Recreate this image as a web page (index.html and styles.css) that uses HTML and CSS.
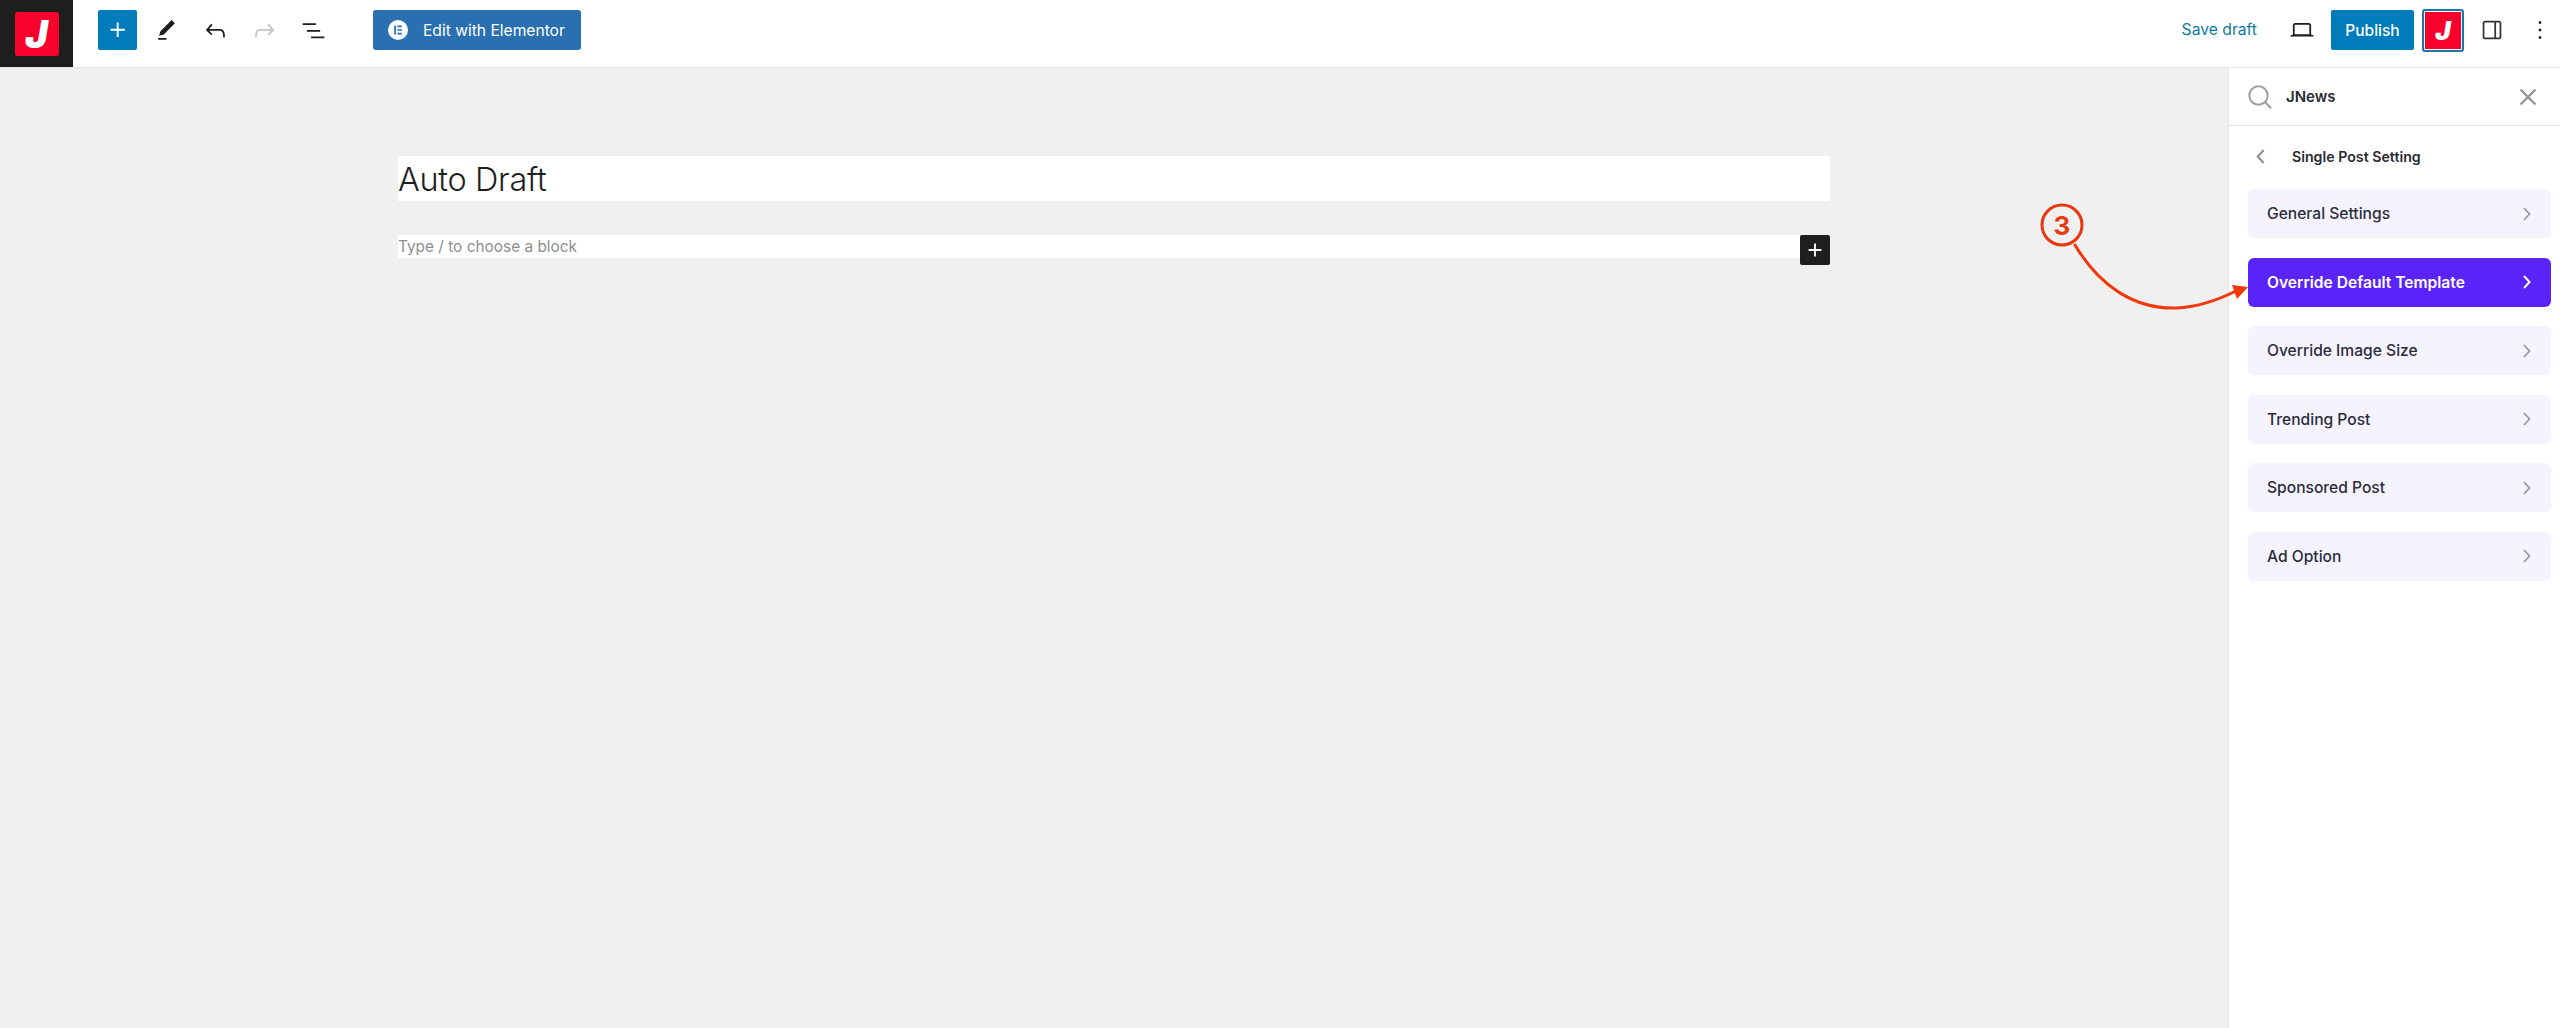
FILE: index.html
```html
<!DOCTYPE html>
<html lang="en">
<head>
<meta charset="utf-8">
<title>Auto Draft</title>
<link rel="stylesheet" href="styles.css">
</head>
<body>
<div class="app">
  <header class="topbar">
    <div class="site-logo"><div class="j-tile"><span class="j-letter">J</span></div></div>
    <button class="add-btn"><svg class="icon-add" viewBox="0 0 24 24"><path d="M11 12.5V17.5H12.5V12.5H17.5V11H12.5V6H11V11H6V12.5H11Z"/></svg></button>
    <div class="tools">
      <span class="slot"><svg class="icon-pen" viewBox="0 0 24 24"><path d="M20.1 5.1L16.9 2 6.2 12.7l-1.3 4.4 4.5-1.3L20.1 5.1zM4 20.8h8v-1.5H4v1.5z"/></svg></span>
      <span class="slot"><svg class="icon-lg" viewBox="0 0 24 24"><path d="M18.3 11.7c-.6-.6-1.4-.9-2.3-.9H6.7l2.9-3.3-1.1-1-4.5 5L8.5 16l1-1-2.7-2.7H16c.5 0 .9.2 1.3.5 1 1 1 3.4 1 4.5v.3h1.5v-.2c0-1.5 0-4.3-1.5-5.7z"/></svg></span>
      <span class="slot"><svg class="icon-lg icon-off" viewBox="0 0 24 24"><path d="M15.6 6.5l-1.1 1 2.9 3.3H8c-.9 0-1.7.3-2.3.9-1.4 1.5-1.4 4.2-1.4 5.6v.2h1.5v-.3c0-1.1 0-3.5 1-4.5.3-.3.7-.5 1.3-.5h9.2L14.5 15l1.1 1.1 4.6-4.6-4.6-5z"/></svg></span>
      <span class="slot"><svg class="icon-lg" viewBox="0 0 24 24"><path d="M3 6h11v1.5H3V6Zm3.5 5.5h11V13h-11v-1.5ZM21 17H10v1.5h11V17Z"/></svg></span>
    </div>
    <button class="elementor-btn">
      <svg class="icon-el" viewBox="0 0 20 20"><circle cx="10" cy="10" r="10" fill="#fff"/><path fill="#2a6fb0" d="M6.2 5.6h1.7v8.8H6.2zM9.4 5.6h4.4v1.7H9.4zM9.4 9.15h4.4v1.7H9.4zM9.4 12.7h4.4v1.7H9.4z"/></svg>
      <span>Edit with Elementor</span>
    </button>
    <div class="top-right">
      <span class="save-draft">Save draft</span>
      <span class="slot slot-laptop"><svg class="icon-laptop" viewBox="0 0 24 24"><path d="M20.5 16h-.7V8c0-1.1-.9-2-2-2H6.2c-1.1 0-2 .9-2 2v8h-.7c-.8 0-1.5.7-1.5 1.5h20c0-.8-.7-1.5-1.5-1.5zM5.7 8c0-.3.2-.5.5-.5h11.6c.3 0 .5.2.5.5v7.6H5.7V8z"/></svg></span>
      <button class="publish">Publish</button>
      <div class="j-toggle"><span class="j-letter j-small">J</span></div>
      <span class="slot slot-side"><svg class="icon-side" viewBox="0 0 24 24"><path d="M18 4H6c-1.1 0-2 .9-2 2v12c0 1.1.9 2 2 2h12c1.1 0 2-.9 2-2V6c0-1.1-.9-2-2-2zm-4 14.5H6c-.3 0-.5-.2-.5-.5V6c0-.3.2-.5.5-.5h8v13zm4.5-.5c0 .3-.2.5-.5.5h-2.5v-13H18c.3 0 .5.2.5.5v12z"/></svg></span>
      <span class="slot slot-dots"><svg class="icon-dots" viewBox="0 0 24 24"><path d="M13 19h-2v-2h2v2zm0-6h-2v-2h2v2zm0-6h-2V5h2v2z"/></svg></span>
    </div>
  </header>

  <main class="workspace">
    <section class="canvas">
      <div class="title-box">Auto Draft</div>
      <div class="block-row">
        <div class="placeholder">Type / to choose a block</div>
        <button class="block-add"><svg class="icon-block" viewBox="0 0 24 24"><path d="M11 12.5V19H13V13H19V11H13V5H11V11H5V13H11Z"/></svg></button>
      </div>
    </section>

    <aside class="sidebar">
      <div class="side-head">
        <svg class="icon-search" viewBox="0 0 24 24"><circle cx="10.5" cy="10.5" r="9.2"/><path d="M17 17l6 6.3"/></svg>
        <span class="side-title">JNews</span>
        <svg class="icon-close" viewBox="0 0 18 18"><path d="M1.5 1.5l15 15M16.5 1.5l-15 15"/></svg>
      </div>
      <div class="side-back">
        <svg class="icon-back" viewBox="0 0 8 14"><path d="M7 1L1.5 7 7 13"/></svg>
        <span>Single Post Setting</span>
      </div>
      <ul class="menu">
        <li class="menu-item"><span>General Settings</span><svg class="chev" viewBox="0 0 8 14"><path d="M1 1l5.5 6L1 13"/></svg></li>
        <li class="menu-item is-active"><span>Override Default Template</span><svg class="chev" viewBox="0 0 8 14"><path d="M1 1l5.5 6L1 13"/></svg></li>
        <li class="menu-item"><span>Override Image Size</span><svg class="chev" viewBox="0 0 8 14"><path d="M1 1l5.5 6L1 13"/></svg></li>
        <li class="menu-item"><span>Trending Post</span><svg class="chev" viewBox="0 0 8 14"><path d="M1 1l5.5 6L1 13"/></svg></li>
        <li class="menu-item"><span>Sponsored Post</span><svg class="chev" viewBox="0 0 8 14"><path d="M1 1l5.5 6L1 13"/></svg></li>
        <li class="menu-item"><span>Ad Option</span><svg class="chev" viewBox="0 0 8 14"><path d="M1 1l5.5 6L1 13"/></svg></li>
      </ul>
    </aside>
  </main>

  <svg class="callout" viewBox="0 0 230 120">
    <circle class="callout-ring" cx="32" cy="30" r="20"/>
    <text class="callout-num" x="32" y="39.5" text-anchor="middle">3</text>
    <path class="callout-line" d="M45 50C70 92 105 114 146 113C170 112 190 104 206 96"/>
    <path class="callout-head" d="M218 92L202 90L207 104Z"/>
  </svg>
</div>
</body>
</html>
```
FILE: styles.css
```css
* { box-sizing: border-box; }
html, body { margin: 0; padding: 0; }
body { font-family: Inter, "Liberation Sans", sans-serif; background: #f0f0f0; color: #1e1e1e; }
button { font: inherit; border: 0; padding: 0; margin: 0; cursor: pointer; }
svg { display: block; }
.app { position: relative; width: 2560px; height: 1028px; display: flex; flex-direction: column; overflow: hidden; }

.topbar { flex: 0 0 68px; display: flex; align-items: flex-start; background: #fff; border-bottom: 1px solid #e4e4e4; }
.site-logo { flex: 0 0 73px; height: 67px; background: #1e1e1e; display: flex; align-items: center; justify-content: center; }
.j-tile { width: 44px; height: 44px; border-radius: 2px; background: #f6022c; display: flex; align-items: center; justify-content: center; }
.j-letter { color: #fff; font-family: Inter, sans-serif; font-weight: 900; font-style: italic; font-size: 38px; line-height: 1; }
.j-small { font-size: 26px; }
.add-btn { flex: 0 0 39px; height: 40px; margin: 10px 0 0 25px; background: #007cba; border-radius: 2px; display: flex; align-items: center; justify-content: center; }
.icon-add { width: 30px; height: 30px; fill: #fff; }
.tools { display: flex; margin-left: 5px; height: 60px; }
.slot { display: flex; align-items: center; justify-content: center; width: 49px; height: 60px; }
.icon-pen { width: 25px; height: 25px; fill: #1e1e1e; }
.icon-lg { width: 29px; height: 29px; fill: #1e1e1e; }
.icon-off { fill: #c4c4c4; }
.elementor-btn { margin: 10px 0 0 35px; width: 208px; height: 40px; background: #2a6fb0; color: #fff; border-radius: 3px; display: flex; align-items: center; padding-left: 15px; font-size: 15.6px; font-weight: 400; }
.icon-el { width: 20px; height: 20px; margin-right: 15px; }
.top-right { margin-left: auto; display: flex; align-items: flex-start; }
.save-draft { color: #0b7ba0; font-size: 15.7px; line-height: 60px; margin-right: 15px; }
.slot-laptop { width: 59px; }
.icon-laptop { width: 28px; height: 28px; fill: #1e1e1e; }
.publish { width: 83px; height: 40px; margin: 10px 8px 0 0; background: #007cba; color: #fff; border-radius: 2px; font-size: 15.5px; font-weight: 500; }
.j-toggle { width: 42px; height: 43px; margin-top: 9px; background: #f6022c; border: 2px solid #fff; outline: 2px solid #1a78a8; outline-offset: -2px; border-radius: 3px; display: flex; align-items: center; justify-content: center; box-shadow: inset 0 0 0 1px #fff; }
.slot-side { width: 56px; }
.icon-side { width: 28px; height: 28px; fill: #333; }
.slot-dots { width: 40px; }
.icon-dots { width: 30px; height: 30px; fill: #1e1e1e; }

.workspace { flex: 1; display: flex; min-height: 0; }
.canvas { flex: 1; padding: 88px 398px 0 398px; }
.title-box { height: 45px; background: #fff; font-size: 32.4px; font-weight: 300; line-height: 47px; color: #1e1e1e; letter-spacing: -0.3px; margin-bottom: 34px; }
.block-row { display: flex; align-items: flex-start; }
.placeholder { flex: 1; height: 23px; background: #fff; color: #8f8f8f; font-size: 15.4px; line-height: 23px; }
.block-add { flex: 0 0 30px; height: 30px; background: #1e1e1e; border-radius: 2px; display: flex; align-items: center; justify-content: center; }
.icon-block { width: 22px; height: 22px; fill: #fff; }

.sidebar { flex: 0 0 332px; background: #fff; border-left: 1px solid #e4e4e4; }
.side-head { height: 58px; border-bottom: 1px solid #e4e4e4; display: flex; align-items: center; padding: 0 23px 0 19px; }
.icon-search { width: 24px; height: 24px; fill: none; stroke: #9b9ea3; stroke-width: 2; margin-right: 14px; }
.side-title { flex: 1; font-size: 15px; font-weight: 600; color: #2a2a33; }
.icon-close { width: 18px; height: 18px; fill: none; stroke: #8e9196; stroke-width: 2.2; }
.side-back { height: 60px; display: flex; align-items: center; padding-left: 27px; font-size: 14.2px; font-weight: 600; color: #2a2a33; }
.icon-back { width: 9px; height: 15px; fill: none; stroke: #8e9196; stroke-width: 2; margin-right: 27px; }
.menu { list-style: none; margin: 3px 9px 0 19px; padding: 0; display: flex; flex-direction: column; gap: 19.6px; }
.menu-item { height: 49px; background: #f5f4fe; border-radius: 6px; display: flex; align-items: center; justify-content: space-between; padding: 0 20px 0 19px; font-size: 15.6px; font-weight: 500; color: #2c2c3a; }
.chev { width: 8px; height: 14px; fill: none; stroke: #9a9aa4; stroke-width: 1.8; }
.is-active { background: #5a24f8; color: #fff; font-weight: 600; }
.is-active .chev { stroke: #fff; stroke-width: 2; }

.callout { position: absolute; left: 2030px; top: 195px; width: 230px; height: 120px; }
.callout-ring { fill: none; stroke: #e8380f; stroke-width: 3; }
.callout-num { fill: #e8380f; font-family: Inter, sans-serif; font-size: 26px; font-weight: 700; }
.callout-line { fill: none; stroke: #f0380a; stroke-width: 3; stroke-linecap: round; }
.callout-head { fill: #f0380a; }
```
